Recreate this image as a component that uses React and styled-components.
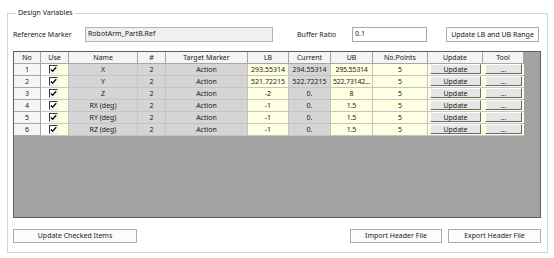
import React from "react";
import styled, { createGlobalStyle } from "styled-components";

const Global = createGlobalStyle`
  html, body { margin: 0; padding: 0; background: #ffffff; }
  body { font-family: "Noto Sans", "Open Sans", sans-serif; font-size: 7px; color: #1a1a1a; }
  * { box-sizing: border-box; }
`;

const Page = styled.div`
  width: 554px;
  height: 258px;
  padding: 8px 6px 0 7px;
`;

const Group = styled.fieldset`
  margin: 0;
  width: 541px;
  height: 245px;
  border: 1px solid #d4d4d4;
  padding: 9px 6px 8px 5px;
  display: flex;
  flex-direction: column;
`;

const Legend = styled.legend`
  padding: 0 2px;
  margin-left: 3px;
  line-height: 10px;
  height: 10px;
`;

const TopRow = styled.div`
  display: flex;
  align-items: center;
  height: 15px;
`;

const Label = styled.span`
  width: ${(p) => p.$w}px;
  white-space: nowrap;
`;

const Box = styled.div`
  width: ${(p) => p.$w}px;
  height: 15px;
  margin-right: ${(p) => p.$mr || 0}px;
  background: ${(p) => (p.$readonly ? "#f0f0f0" : "#ffffff")};
  border: 1px solid ${(p) => (p.$readonly ? "#b4b4b4" : "#a8a8a8")};
  padding: 1px 2px;
  line-height: 10px;
`;

const Button = styled.button`
  font: inherit;
  color: inherit;
  width: ${(p) => p.$w}px;
  height: ${(p) => p.$h || 14}px;
  background: #fcfcfc;
  border: 1px solid #adadad;
  padding: 0;
  line-height: 10px;
  white-space: nowrap;
  margin-left: ${(p) => p.$ml || 0}px;
`;

const Grid = styled.div`
  margin-top: 9px;
  height: 167px;
  background: #a3a3a3;
  border: 1px solid #5e5e5e;
  display: grid;
  grid-template-columns: 27px 28px 69px 28px 82px 41px 42px 42px 55px 55px 41px;
  grid-auto-rows: 12px;
  align-content: start;
`;

const Head = styled.div`
  background: #f4f4f4;
  border-right: 1px solid #a6a6a6;
  border-bottom: 1px solid #a6a6a6;
  text-align: center;
  line-height: 11px;
`;

const bgs = {
  no: "#f6f6f6",
  gray: "#d5d5d5",
  yellow: "#ffffe1",
};

const Cell = styled.div`
  background: ${(p) => bgs[p.$kind]};
  border-right: 1px solid ${(p) => (p.$kind === "no" ? "#a6a6a6" : "#c4c4c4")};
  border-bottom: 1px solid ${(p) => (p.$kind === "no" ? "#a6a6a6" : "#c4c4c4")};
  text-align: center;
  line-height: 11px;
  white-space: nowrap;
  overflow: hidden;
  letter-spacing: ${(p) => (p.$tight ? "-0.2px" : "0")};
`;

const CheckCell = styled.div`
  background: linear-gradient(to right, #ffffff 8px, #ffffe1 8px);
  border-right: 1px solid #c4c4c4;
  border-bottom: 1px solid #c4c4c4;
  display: flex;
  align-items: center;
  padding-left: 8px;
`;

const CheckBox = styled.span`
  width: 9px;
  height: 9px;
  background: #ffffff;
  border-top: 1px solid #3c3c3c;
  border-left: 1px solid #3c3c3c;
  border-right: 1px solid #e3e3e3;
  border-bottom: 1px solid #e3e3e3;
  display: flex;
  align-items: center;
  justify-content: center;
`;

const BtnCell = styled.div`
  background: #ffffe1;
  padding: 0 2px 1px 2px;
  border-bottom: 1px solid #c4c4c4;
  display: flex;
`;

const CellButton = styled.div`
  flex: 1;
  background: #e6e6e6;
  border-top: 1px solid #ffffff;
  border-left: 1px solid #ffffff;
  border-right: 1px solid #6a6a6a;
  border-bottom: 1px solid #6a6a6a;
  text-align: center;
  line-height: 9px;
`;

const Spacer = styled.div`
  flex: 1;
`;

const BottomRow = styled.div`
  display: flex;
  margin-top: 11px;
`;

const headers = ["No", "Use", "Name", "#", "Target Marker", "LB", "Current", "UB", "No.Points", "Update", "Tool"];

const rows = [
  ["X", "293.55314", "294.55314", "295.55314"],
  ["Y", "521.72215", "522.72215", "522.73142..."],
  ["Z", "-2", "0.", "8"],
  ["RX (deg)", "-1", "0.", "1.5"],
  ["RY (deg)", "-1", "0.", "1.5"],
  ["RZ (deg)", "-1", "0.", "1.5"],
];

const Check = () => (
  <svg width="7" height="7" viewBox="0 0 7 7">
    <path d="M0.8 3.4 L2.6 5.2 L6.2 1.2" stroke="#111" strokeWidth="1.4" fill="none" />
  </svg>
);

export default function App() {
  return (
    <>
      <Global />
      <Page>
        <Group>
          <Legend>Design Variables</Legend>
          <TopRow>
            <Label $w={72}>Reference Marker</Label>
            <Box $w={188} $mr={24} $readonly>RobotArm_PartB.Ref</Box>
            <Label $w={55}>Buffer Ratio</Label>
            <Box $w={75}>0.1</Box>
            <Button $w={93} $h={15} $ml={19}>Update LB and UB Range</Button>
          </TopRow>
          <Grid>
            {headers.map((h) => (
              <Head key={h}>{h}</Head>
            ))}
            {rows.map((r, i) => (
              <React.Fragment key={i}>
                <Cell $kind="no">{i + 1}</Cell>
                <CheckCell>
                  <CheckBox>
                    <Check />
                  </CheckBox>
                </CheckCell>
                <Cell $kind="gray">{r[0]}</Cell>
                <Cell $kind="gray">2</Cell>
                <Cell $kind="gray">Action</Cell>
                <Cell $kind="yellow">{r[1]}</Cell>
                <Cell $kind="gray">{r[2]}</Cell>
                <Cell $kind="yellow" $tight>{r[3]}</Cell>
                <Cell $kind="yellow">5</Cell>
                <BtnCell>
                  <CellButton>Update</CellButton>
                </BtnCell>
                <BtnCell>
                  <CellButton>...</CellButton>
                </BtnCell>
              </React.Fragment>
            ))}
          </Grid>
          <BottomRow>
            <Button $w={124}>Update Checked Items</Button>
            <Spacer />
            <Button $w={92}>Import Header File</Button>
            <Button $w={93} $ml={6}>Export Header File</Button>
          </BottomRow>
        </Group>
      </Page>
    </>
  );
}
